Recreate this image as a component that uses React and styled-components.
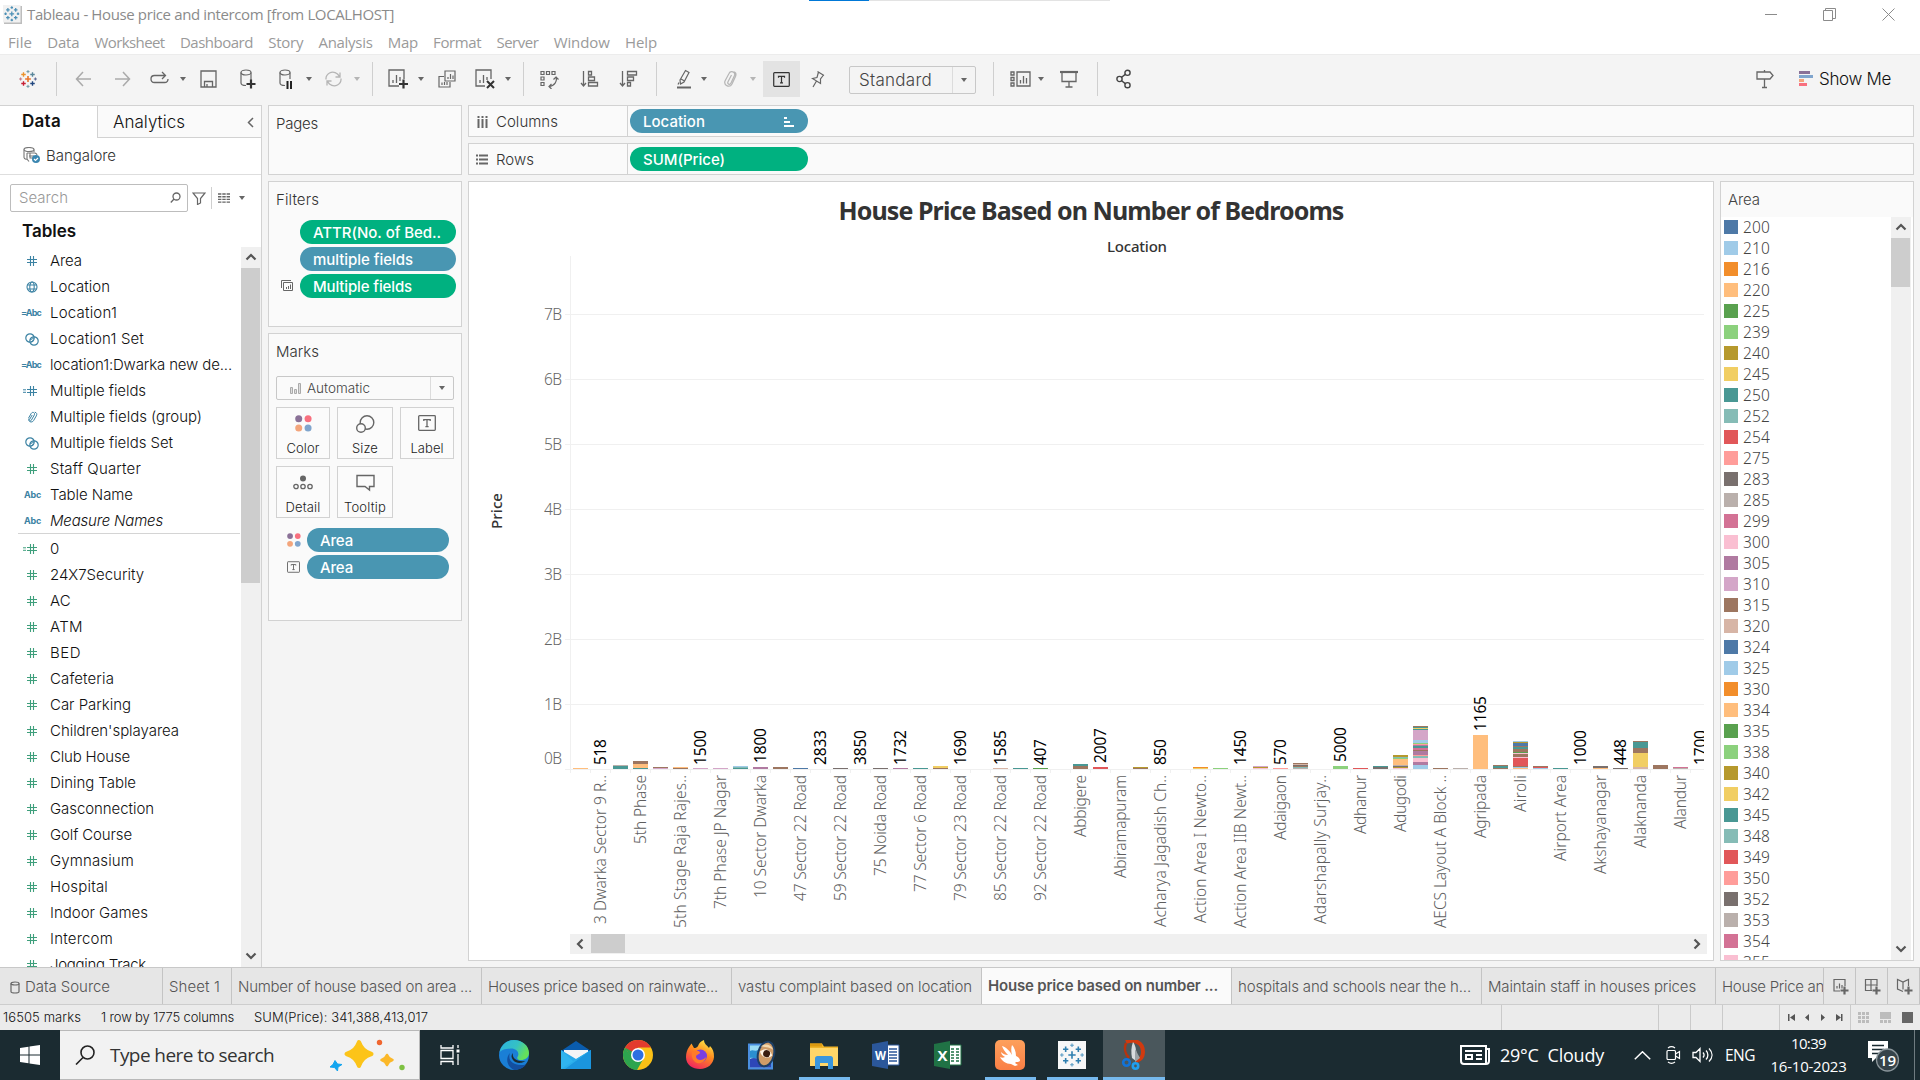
import React, { useLayoutEffect, useRef } from "react";
import styled, { createGlobalStyle, css } from "styled-components";

const Global = createGlobalStyle`
  *, *::before, *::after { box-sizing: border-box; }
  html, body { margin: 0; padding: 0; overflow: hidden; }
  body { background: #f4f4f4; }
  svg { display: block; flex: none; }
`;

const UI = `"Inter", "Liberation Sans", sans-serif`;
const VIZ = `"Noto Sans", "Open Sans", sans-serif`;
const WIN = `"Open Sans", "Noto Sans", sans-serif`;
const LINE = "#d2d2d2";
const BLUE = "#4996b2";
const GREEN = "#00b180";

/* ---------- text that keeps a given advance width ---------- */
const Run = styled.span`
  display: inline-block;
  white-space: pre;
  flex: none;
`;

function Fit({ w, children }) {
  const ref = useRef(null);
  useLayoutEffect(() => {
    const el = ref.current;
    el.style.letterSpacing = "0px";
    const natural = el.getBoundingClientRect().width;
    el.style.letterSpacing = `${(w + 1 - natural) / String(children).length}px`;
  }, [w, children]);
  return <Run ref={ref}>{children}</Run>;
}

/* ---------- page frame ---------- */
const Screen = styled.div`
  width: 1920px;
  height: 1080px;
  overflow: hidden;
  display: flex;
  flex-direction: column;
  background: #f4f4f4;
  font: 350 15px/20px ${UI};
  color: #333;
`;

const TitleBar = styled.header`
  height: 30px;
  background: #fff;
  display: flex;
  align-items: center;
  padding: 0 25px 2px 3px;
  position: relative;
  font: 400 15px/20px ${WIN};
  color: #8b8b8b;
`;
const TitleText = styled.div`
  margin-left: 5px;
  flex: 1;
`;
const LoadStrip = styled.div`
  position: absolute;
  top: 0;
  left: 809px;
  width: 301px;
  height: 1px;
  background: linear-gradient(90deg, #0078d7 60px, #e3e3e3 60px);
`;
const WindowButtons = styled.div`
  display: flex;
  align-items: center;
  gap: 46px;
`;

const MenuBar = styled.nav`
  height: 24px;
  background: #fff;
  display: flex;
  gap: 15.3px;
  padding: 2px 8px 0;
  font: 400 15px/20px ${WIN};
  color: #9a9a9a;
`;

const Toolbar = styled.div`
  height: 51px;
  border-top: 1px solid #ececec;
  display: flex;
  align-items: center;
  padding-bottom: 2px;
`;
const Slot = styled.div`
  width: ${(p) => p.$w}px;
  margin-left: ${(p) => p.$l}px;
  height: 36px;
  display: flex;
  align-items: center;
  justify-content: center;
  flex: none;
  background: ${(p) => (p.$on ? "#e3e3e3" : "transparent")};
`;
const Rule = styled.div`
  width: 1px;
  height: ${(p) => p.$h || 34}px;
  margin-left: ${(p) => p.$l}px;
  background: #cfcfcf;
  flex: none;
`;
const Caret = styled.i`
  width: 0;
  height: 0;
  flex: none;
  margin-left: ${(p) => p.$l || 0}px;
  border: ${(p) => p.$s || 3}px solid transparent;
  border-top: ${(p) => (p.$s || 3) + 1}px solid ${(p) => p.$c || "#666"};
  border-bottom: 0;
`;
const FitSelect = styled.div`
  width: 127px;
  height: 28px;
  margin: 2px 0 0 24px;
  border: 1px solid #c8c8c8;
  border-radius: 2px;
  display: flex;
  align-items: center;
  font-size: 17px;
  padding-left: 9px;
  color: #444;
  flex: none;
`;
const SelectArrow = styled.div`
  margin-left: auto;
  width: ${(p) => p.$w}px;
  height: 100%;
  border-left: 1px solid #dcdcdc;
  display: flex;
  align-items: center;
  justify-content: center;
`;
const ShowMe = styled.div`
  display: flex;
  align-items: center;
  gap: 6px;
  margin-left: 25px;
  font-size: 17px;
  color: #111;
`;

const Work = styled.main`
  height: 862px;
  display: flex;
`;

/* ---------- data pane ---------- */
const DataPane = styled.aside`
  width: 262px;
  background: #fff;
  border-top: 1px solid ${LINE};
  border-right: 1px solid ${LINE};
  display: flex;
  flex-direction: column;
  color: #111;
`;
const PaneTabs = styled.div`
  display: flex;
  height: 32px;
`;
const PaneTab = styled.div`
  width: ${(p) => (p.$active ? 97 : 164)}px;
  display: flex;
  align-items: center;
  font-size: 17px;
  color: #111;
  ${(p) =>
    p.$active
      ? css`
          font-weight: 600;
          padding: 0 0 2px 22px;
        `
      : css`
          background: #fafafa;
          border-left: 1px solid ${LINE};
          border-bottom: 1px solid ${LINE};
          justify-content: space-between;
          padding: 1px 7px 0 15px;
        `}
`;
const Source = styled.div`
  height: 37px;
  border-bottom: 1px solid #dedede;
  display: flex;
  align-items: center;
  padding: 0 0 1px 23px;
  gap: 5px;
  color: #333;
`;
const SearchRow = styled.div`
  height: 46px;
  display: flex;
  align-items: center;
  padding-left: 10px;
`;
const SearchBox = styled.div`
  width: 178px;
  height: 28px;
  border: 1px solid #bdbdbd;
  border-radius: 2px;
  display: flex;
  align-items: center;
  justify-content: space-between;
  padding: 0 6px 0 8px;
  color: #999;
  margin-right: 4px;
`;
const TablesHead = styled.div`
  height: 26px;
  padding: 0 0 0 22px;
  font-size: 17px;
  font-weight: 600;
  color: #111;
`;
const FieldArea = styled.div`
  flex: 1;
  min-height: 0;
  display: flex;
  justify-content: space-between;
`;
const FieldList = styled.div`
  width: 240px;
  height: 720px;
  overflow: hidden;
  padding-top: 1px;
`;
const FieldRow = styled.div`
  height: 26px;
  display: flex;
  align-items: center;
  font-style: ${(p) => (p.$italic ? "italic" : "normal")};
`;
const FieldIcon = styled.div`
  width: 50px;
  height: 26px;
  display: flex;
  align-items: center;
  padding-left: ${(p) => p.$l}px;
  flex: none;
  color: ${(p) => (p.$dim ? "#3b82a3" : "#3f9f7c")};
`;
const AbcTag = styled.span`
  font: normal 700 9px/12px ${UI};
`;
const Divider = styled.div`
  height: 1px;
  margin: -1px 0 2px 18px;
  background: #d4d4d4;
`;

const VScroll = styled.div`
  width: 20px;
  height: ${(p) => p.$h}px;
  background: #f0f0f0;
  display: flex;
  flex-direction: column;
  align-items: center;
`;
const ScrollEnd = styled.div`
  height: 21px;
  width: ${(p) => p.$w || 20}px;
  padding: 0 1px 1px 0;
  display: flex;
  align-items: center;
  justify-content: center;
  flex: none;
`;
const VThumb = styled.div`
  width: 19px;
  height: ${(p) => p.$h}px;
  background: #cdcdcd;
  align-self: flex-start;
  margin-bottom: auto;
`;

/* ---------- cards column ---------- */
const Cards = styled.section`
  width: 206px;
  padding-left: 6px;
  display: flex;
  flex-direction: column;
  gap: 6px;
`;
const Card = styled.div`
  width: 194px;
  height: ${(p) => p.$h}px;
  background: #fafafa;
  border: 1px solid ${LINE};
  display: flex;
  flex-direction: column;
  align-items: flex-start;
  padding: 8px 0 0 7px;
  color: #333;
`;
const PillLine = styled.div`
  display: flex;
  align-items: center;
  height: 27px;
  padding-left: ${(p) => p.$l}px;
`;
const PillIcon = styled.div`
  width: ${(p) => p.$w}px;
`;
const Pill = styled.div`
  width: ${(p) => p.$w}px;
  height: 24px;
  border-radius: 12px;
  background: ${(p) => p.$c};
  color: #fff;
  display: flex;
  align-items: center;
  justify-content: space-between;
  padding: 2px 14px 0 13px;
  font-weight: 500;
  flex: none;
`;
const PillStack = styled.div`
  margin-top: ${(p) => p.$mt}px;
`;
const MarkType = styled.div`
  width: 178px;
  height: 24px;
  margin: 14px 0 7px 0;
  border: 1px solid #c8c8c8;
  border-radius: 2px;
  display: flex;
  align-items: center;
  padding-left: 13px;
  gap: 6px;
  font-size: 13.5px;
  color: #444;
`;
const MarkGrid = styled.div`
  display: grid;
  grid-template-columns: 54px 56px 54px;
  grid-auto-rows: 52px;
  gap: 7px;
`;
const MarkButton = styled.div`
  border: 1px solid ${LINE};
  background: #fbfbfb;
  display: flex;
  flex-direction: column;
  align-items: center;
  justify-content: space-between;
  padding: 7px 0 0;
  font-size: 13px;
  color: #222;
`;

/* ---------- shelves and view ---------- */
const Right = styled.section`
  width: 1446px;
  display: flex;
  flex-direction: column;
  gap: 6px;
`;
const Shelf = styled.div`
  height: 32px;
  background: #fafafa;
  border: 1px solid ${LINE};
  display: flex;
  align-items: center;
`;
const ShelfName = styled.div`
  width: 159px;
  height: 100%;
  border-right: 1px solid ${LINE};
  display: flex;
  align-items: center;
  padding: 1px 0 0 ${(p) => p.$l}px;
  gap: 8px;
  margin-right: 2px;
  color: #333;
`;
const Lower = styled.div`
  display: flex;
  gap: 6px;
  height: 780px;
`;
const View = styled.div`
  width: 1246px;
  border: 1px solid ${LINE};
  background: #fff;
  display: flex;
  flex-direction: column;
`;
const ChartTitle = styled.h1`
  margin: 0;
  height: 50px;
  padding-top: 11px;
  text-align: center;
  font: 700 25px/34px ${VIZ};
  color: #333;
`;
const HScroll = styled.div`
  width: 1137px;
  height: 20px;
  margin: 0 0 0 101px;
  background: #f0f0f0;
  display: flex;
  align-items: center;
`;
const HThumb = styled.div`
  width: 34px;
  height: 19px;
  background: #cdcdcd;
  margin-right: auto;
  align-self: flex-start;
`;
const Legend = styled.div`
  width: 194px;
  border: 1px solid ${LINE};
  background: #fafafa;
`;
const LegendHead = styled.div`
  height: 35px;
  padding: 8px 0 0 7px;
  color: #444;
`;
const LegendBody = styled.div`
  height: 743px;
  background: #fff;
  display: flex;
  justify-content: space-between;
  padding-right: 2px;
`;
const LegendList = styled.div`
  height: 743px;
  overflow: hidden;
  padding-left: 3px;
`;
const LegendItem = styled.div`
  height: 21px;
  display: flex;
  align-items: flex-start;
  gap: 5px;
  font: 350 15.5px/21px ${VIZ};
  color: #444;
`;
const Swatch = styled.div`
  width: 14px;
  height: 14px;
  margin-top: 3px;
  background: ${(p) => p.$c};
`;

/* ---------- bottom ---------- */
const SheetTabs = styled.div`
  height: 38px;
  background: #e6e6e6;
  border-top: 1px solid #c8c8c8;
  border-bottom: 1px solid #cdcdcd;
  display: flex;
  flex: none;
`;
const SheetTab = styled.div`
  width: ${(p) => p.$w}px;
  border-right: 1px solid #c4c4c4;
  padding: ${(p) => (p.$active ? 0 : 2)}px 0 0 ${(p) => p.$l ?? 6}px;
  display: flex;
  align-items: center;
  gap: 5px;
  overflow: hidden;
  flex: none;
  color: #555;
  background: ${(p) => (p.$active ? "#fafafa" : "transparent")};
  font-weight: ${(p) => (p.$active ? 600 : 350)};
`;
const Status = styled.div`
  height: 25px;
  background: #ebebeb;
  display: flex;
  flex: none;
  font-size: 13px;
  line-height: 24px;
  color: #111;
`;
const StatusText = styled.div`
  padding-left: ${(p) => p.$l}px;
`;
const StatusCell = styled.div`
  width: ${(p) => p.$w}px;
  margin-left: ${(p) => (p.$push ? "auto" : 0)};
  border-left: 1px solid #cacaca;
  display: flex;
  align-items: center;
  justify-content: center;
  padding-bottom: 1px;
`;

const TaskBar = styled.footer`
  height: 50px;
  flex: none;
  background: #1b2b31;
  display: flex;
  color: #fff;
  font: 400 16px/24px ${WIN};
`;
const Start = styled.div`
  width: 60px;
  display: flex;
  align-items: center;
  justify-content: center;
`;
const TaskSearch = styled.div`
  width: 360px;
  background: #f2f2f2;
  border: 1px solid #b9b9b9;
  border-left: 0;
  display: flex;
  align-items: center;
  padding: 0 12px 0 15px;
  color: #333;
  font-size: 19px;
  line-height: 26px;
`;
const TaskSearchText = styled.div`
  margin: 0 auto 0 15px;
`;
const TaskTile = styled.div`
  width: ${(p) => (p.$first ? 63 : 62)}px;
  padding-right: ${(p) => (p.$first ? 3 : 0)}px;
  display: flex;
  flex-direction: column;
  align-items: center;
  justify-content: flex-end;
  background: ${(p) => (p.$focus ? "#4a575c" : "transparent")};
`;
const TaskArt = styled.div`
  height: 47px;
  display: flex;
  align-items: center;
  padding-top: 2px;
`;
const OpenBar = styled.div`
  height: 3px;
  width: ${(p) => p.$w}px;
  background: #76b9ed;
`;
const Tray = styled.div`
  margin-left: auto;
  display: flex;
  align-items: center;
  padding-right: 5px;
`;
const TrayItem = styled.div`
  margin-left: ${(p) => p.$l}px;
  font-size: ${(p) => p.$s || 16}px;
`;
const Clock = styled.div`
  margin-left: 15px;
  width: 77px;
  text-align: center;
  font-size: 15px;
  line-height: 23px;
  padding-bottom: 1px;
`;
const ShowDesk = styled.div`
  width: 1px;
  height: 50px;
  background: #6f7b80;
  margin-left: 13px;
`;

/* ---------- icons ---------- */
const Svg = ({ w = 18, h = 18, c = "#666", s = 1.2, children }) => (
  <svg width={w} height={h} viewBox={`0 0 ${w} ${h}`} fill="none" stroke={c} strokeWidth={s}>
    {children}
  </svg>
);

const plus = (x, y, r, c, s = 1.4) => (
  <path key={`${x}-${y}`} d={`M${x - r} ${y}h${2 * r}M${x} ${y - r}v${2 * r}`} stroke={c} strokeWidth={s} />
);
const TableauMark = ({ size = 18 }) => (
  <svg width={size} height={size} viewBox="0 0 20 20" fill="none">
    {plus(10, 10, 3.2, "#e8762d", 1.8)}
    {plus(5, 5, 2.5, "#eb912b", 1.5)}
    {plus(15, 5, 2.5, "#59879b", 1.5)}
    {plus(5, 15, 2.5, "#c72035", 1.5)}
    {plus(15, 15, 2.5, "#1f457e", 1.5)}
    {plus(10, 1.8, 1.7, "#7099a6", 1.1)}
    {plus(10, 18.2, 1.7, "#7199a6", 1.1)}
    {plus(1.8, 10, 1.7, "#c4787f", 1.1)}
    {plus(18.2, 10, 1.7, "#5b6591", 1.1)}
  </svg>
);
const Chev = ({ d, w = 12, h = 12 }) => (
  <svg width={w} height={h} viewBox="0 0 12 12" fill="none" stroke="#555" strokeWidth="2.2">
    <path d={{ up: "M1.5 8.5 6 4l4.5 4.5", down: "M1.5 3.5 6 8l4.5-4.5", left: "M8.5 1.5 4 6l4.5 4.5", right: "M3.5 1.5 8 6l-4.5 4.5" }[d]} />
  </svg>
);
const HashIcon = () => (
  <Svg w={10} h={10} c="currentColor" s={1.1}>
    <path d="M3.5 0v10M6.5 0v10M0 3.5h10M0 6.5h10" />
  </Svg>
);
const EqIcon = () => (
  <Svg w={14} h={10} c="currentColor" s={1.1}>
    <path d="M0 3.8h3M0 6.3h3" strokeWidth="1" />
    <path d="M7.5 0v10M10.5 0v10M4 3.5h10M4 6.5h10" />
  </Svg>
);
const GlobeIcon = () => (
  <Svg w={12} h={12} c="currentColor" s={1.1}>
    <circle cx="6" cy="6" r="5" />
    <ellipse cx="6" cy="6" rx="2.2" ry="5" />
    <path d="M1.5 4h9M1.5 8h9" />
  </Svg>
);
const SetIcon = () => (
  <Svg w={14} h={13} c="currentColor" s={1.2}>
    <circle cx="5" cy="5" r="4.2" />
    <circle cx="9" cy="8" r="4.2" />
    <path d="M5 7l4-2M6 9l3-2" strokeWidth=".9" />
  </Svg>
);
const ClipIcon = () => (
  <Svg w={12} h={12} c="currentColor" s={1}>
    <path d="M2.6 7 5.3 2.3c1.3-2 4.1-.5 3 1.7L5.3 9.3c-.7 1.2-2.3.3-1.7-.9L6.2 4M8.8 1.2c2 .4 2.5 2 1.5 3.7L7.5 9.7c-1.6 2.6-6 .9-4.600-2.300" />
  </Svg>
);
const TIcon = ({ w = 18, h = 16, c = "#666" }) => (
  <svg width={w} height={h} viewBox="0 0 18 16" fill="none" stroke={c} strokeWidth="1.3">
    <rect x=".7" y=".7" width="16.6" height="14.6" rx=".8" />
    <path d="M5.8 6V4.6h6.4V6M9 4.6v7M7.4 11.6h3.2" />
  </svg>
);
const FourDots = ({ s = 16 }) => (
  <svg width={s} height={s} viewBox="0 0 16 16">
    <circle cx="3.5" cy="3.5" r="3.3" fill="#8a7197" />
    <circle cx="12.3" cy="3.5" r="3.3" fill="#f8707f" />
    <circle cx="3.5" cy="12.3" r="3.3" fill="#f3a57c" />
    <circle cx="12.3" cy="12.3" r="3.3" fill="#80a5cd" />
  </svg>
);

const FIELD_ICON = {
  n: [27, <HashIcon />],
  e: [23, <EqIcon />],
  g: [26, <GlobeIcon />],
  s: [25, <SetIcon />],
  c: [26, <ClipIcon />],
  a: [24, <AbcTag><Fit w={16}>Abc</Fit></AbcTag>],
  x: [21, <AbcTag><Fit w={19}>=Abc</Fit></AbcTag>],
};

const DIMENSIONS = [
  ["n", "Area", 31, 1], ["g", "Location", 59, 1], ["x", "Location1", 66, 1], ["s", "Location1 Set", 93, 1],
  ["x", "location1:Dwarka new de...", 181, 1], ["e", "Multiple fields", 95, 1], ["c", "Multiple fields (group)", 151, 1],
  ["s", "Multiple fields Set", 122, 1], ["n", "Staff Quarter", 90, 0], ["a", "Table Name", 82, 1], ["a", "Measure Names", 112, 1],
];
const MEASURES = [
  ["e", "0", 9], ["n", "24X7Security", 93], ["n", "AC", 20], ["n", "ATM", 32], ["n", "BED", 30], ["n", "Cafeteria", 63],
  ["n", "Car Parking", 80], ["n", "Children'splayarea", 128], ["n", "Club House", 79], ["n", "Dining Table", 85],
  ["n", "Gasconnection", 103], ["n", "Golf Course", 81], ["n", "Gymnasium", 83], ["n", "Hospital", 57],
  ["n", "Indoor Games", 97], ["n", "Intercom", 62], ["n", "Jogging Track", 95],
];
const Field = ({ f }) => {
  const [l, icon] = FIELD_ICON[f[0]];
  return (
    <FieldRow $italic={f[1] === "Measure Names"}>
      <FieldIcon $l={l} $dim={f[3]}>{icon}</FieldIcon>
      <Fit w={f[2]}>{f[1]}</Fit>
    </FieldRow>
  );
};

/* ---------- chart data ---------- */
const PAL = {
  b: "#4e79a7", B: "#a0cbe8", o: "#f28e2b", O: "#ffbe7d", g: "#59a14f", G: "#8cd17d", m: "#b6992d", y: "#f1ce63",
  t: "#499894", T: "#86bcb6", r: "#e15759", R: "#ff9d9a", k: "#79706e", K: "#bab0ac", p: "#d37295", P: "#fabfd2",
  v: "#b07aa1", V: "#d4a6c8", w: "#9d7660", W: "#d7b5a6",
};
const LEGEND_ORDER = "bBoOgGmytTrRkKpPvVwW";
const AREAS = [200, 210, 216, 220, 225, 239, 240, 245, 250, 252, 254, 275, 283, 285, 299, 300, 305, 310, 315, 320, 324, 325, 330, 334, 335, 338, 340, 342, 345, 348, 349, 350, 352, 353, 354, 355];

/* slot -> stack from top to bottom, "colour height" pairs */
const STACKS = {
  0: "O1", 2: "K1t3", 3: "w3O4t1", 4: "w1V1", 5: "O1w1", 6: "V1", 7: "V1", 8: "B1T1t1", 9: "v2", 10: "w2", 11: "b1",
  13: "k1", 15: "k1", 16: "v1", 17: "t1", 18: "y2w1", 21: "W1", 22: "t1", 23: "g1", 25: "t2w3", 26: "r2", 28: "m1w1",
  31: "o1y1", 32: "G1", 34: "V1m1P1", 35: "R1", 36: "w1W1k1w1T1K1", 38: "G3", 39: "r1", 40: "t1k2",
  41: "m2T1G1O6K1k1m1P1", 42: "w1t1y1t1V10B3G1R1v1t2p2w1v4R1T2P4v3B4", 43: "w1", 44: "K1", 45: "O34", 46: "w1t2w1",
  47: "B1m1b3w1t2w3g1P1w3P1r8w1B1O1", 48: "w1r1B1", 49: "t1", 51: "k2O1", 52: "k1", 53: "w1t6w5y14W2", 54: "w4", 55: "p1K1",
};
const MARKS = [
  [1, "518"], [6, "1500"], [9, "1800"], [12, "2833"], [14, "3850"], [16, "1732"], [19, "1690"], [21, "1585"], [23, "407"],
  [26, "2007"], [29, "850"], [33, "1450"], [35, "570"], [38, "5000"], [45, "1165"], [50, "1000"], [52, "448"], [56, "1700"],
];
const PLACES = [
  [1, "3 Dwarka Sector 9 R..", 149], [3, "5th Phase", 69], [5, "5th Stage Raja Rajes..", 153], [7, "7th Phase JP Nagar", 134],
  [9, "10 Sector Dwarka", 123], [11, "47 Sector 22 Road", 126], [13, "59 Sector 22 Road", 126], [15, "75 Noida Road", 101],
  [17, "77 Sector 6 Road", 117], [19, "79 Sector 23 Road", 126], [21, "85 Sector 22 Road", 126], [23, "92 Sector 22 Road", 126],
  [25, "Abbigere", 62], [27, "Abiramapuram", 103], [29, "Acharya Jagadish Ch..", 152], [31, "Action Area I Newto..", 148],
  [33, "Action Area IIB Newt..", 153], [35, "Adaigaon", 65], [37, "Adarshapally Surjay..", 149], [39, "Adhanur", 59],
  [41, "Adugodi", 57], [43, "AECS Layout A Block ..", 153], [45, "Agripada", 63], [47, "Airoli", 37], [49, "Airport Area", 86],
  [51, "Akshayanagar", 99], [53, "Alaknanda", 73], [55, "Alandur", 54],
];
const parse = (s) => [...s.matchAll(/([a-zA-Z])(\d+)/g)].map((m) => [PAL[m[1]], +m[2]]);

/* drawing space: origin at the top left of the view, under its title */
const OX = 469, OY = 232;
function Chart() {
  const base = 769 - OY;
  const left = 570 - OX;
  const right = 1704 - OX;
  return (
    <svg width="1244" height="702" viewBox="0 0 1244 702" fontFamily={VIZ} fontSize="15.5">
      <defs>
        <clipPath id="plot"><rect x="0" y="0" width={right} height="702" /></clipPath>
      </defs>
      <text x={1137 - OX} y={252 - OY} textAnchor="middle" fontWeight="500" fontSize="15" fill="#333" textLength="60">Location</text>
      <text transform={`translate(${502 - OX} ${511 - OY}) rotate(-90)`} textAnchor="middle" fontWeight="500" fontSize="15" fill="#333" textLength="36">Price</text>
      <g stroke="#f0f0f0" shapeRendering="crispEdges">
        {[7, 6, 5, 4, 3, 2, 1].map((n) => (
          <path key={n} d={`M${left - 5} ${base + 0.5 - 65 * n}H${right}`} />
        ))}
        <path d={`M${left + 0.5} ${256 - OY}V${base + 4}M${left - 5} ${base + 0.5}H${right}`} />
        {Array.from({ length: 57 }, (_, i) => (
          <path key={i} d={`M${left + i * 20 + 0.5} ${base}v4`} />
        ))}
      </g>
      <g fill="#666" fontWeight="350">
        {[7, 6, 5, 4, 3, 2, 1].map((n) => (
          <text key={n} x={544 - OX} y={base - 65 * n + 6} textLength="18">{n}B</text>
        ))}
        <text x={544 - OX} y={764 - OY} textLength="18">0B</text>
      </g>
      <g clipPath="url(#plot)">
        {Object.entries(STACKS).map(([i, s]) => {
          const parts = parse(s);
          let y = base - parts.reduce((a, b) => a + b[1], 0);
          return parts.map(([c, h], k) => {
            const top = y;
            y += h;
            return <rect key={`${i}-${k}`} x={left + 3 + i * 20} y={top} width="15" height={h} fill={c} shapeRendering="crispEdges" />;
          });
        })}
        <g fill="#000" fontWeight="400">
          {MARKS.map(([i, t]) => {
            const h = i === 45 ? 34 : i === 26 || i === 9 ? 2 : i === 38 ? 3 : 0;
            return (
              <text key={i} transform={`translate(${left + 16 + i * 20} ${base - 4 - h}) rotate(-90)`} textLength={t.length === 4 ? 35 : 26}>{t}</text>
            );
          })}
        </g>
        <g fill="#5e5e5e" fontWeight="350">
          {PLACES.map(([i, t, w]) => (
            <text key={i} transform={`translate(${left + 16 + i * 20} ${775 - OY + w}) rotate(-90)`} textLength={w}>{t}</text>
          ))}
        </g>
      </g>
    </svg>
  );
}

const MENUS = [["File", 23], ["Data", 31], ["Worksheet", 69], ["Dashboard", 72], ["Story", 34], ["Analysis", 53], ["Map", 29], ["Format", 47], ["Server", 41], ["Window", 55], ["Help", 31]];
const SHEETS = [
  ["Sheet 1", 69, 50], ["Number of house based on area ...", 250, 233], ["Houses price based on rainwate...", 250, 229],
  ["vastu complaint based on location", 250, 233], ["House price based on number ...", 250, 229, 1],
  ["hospitals and schools near the h...", 250, 232], ["Maintain staff in houses prices", 234, 207], ["House Price an", 108, 101],
];

const SheetIcon = ({ kind }) => (
  <Svg w={18} h={18} s={1.2}>
    {kind === 0 && <path d="M8 13H2V1.5h11V8M5 10.5V8M7.5 10.5v-5M10 10.5V7" />}
    {kind === 1 && <path d="M8 12.5H1.5v-11H13V8M7 1.5v11M1.5 7H13" />}
    {kind === 2 && <path d="M7 13.5 1.5 11V1.5L7 4l5.5-2.5V8M7 4v7.500" />}
    <path d="M12.5 8.5v8M8.5 12.5h8" strokeWidth="2.2" />
  </Svg>
);

const BAR_TOOLS = (
  <>
    <Slot $w={18} $l={19}><TableauMark size={18} /></Slot>
    <Rule $l={19} />
    <Slot $w={17} $l={18}><Svg w={17} c="#aaa" s={1.5}><path d="M16 9H1.5M8 2 1.5 9 8 16" /></Svg></Slot>
    <Slot $w={17} $l={22}><Svg w={17} c="#aaa" s={1.5}><path d="M1 9h14.5M9 2l6.5 7L9 16" /></Svg></Slot>
    <Slot $w={19} $l={19}><Svg w={19} s={1.3}><path d="M15 5.5H4.500C2 5.5 1 6.500 1 9s1 3.500 3.500 3.500h10c2.500 0 3.500-1 3.500-3.500M12 2l3.500 3.500L12 9" /></Svg></Slot>
    <Caret $l={11} />
    <Slot $w={17} $l={14}><Svg w={17} s={1.3}><path d="M1 1h15v16H1zM4.5 17v-5.500h8V17M7 17v-3" /></Svg></Slot>
    <Slot $w={16} $l={23}><Svg w={16} h={20} s={1.2}><ellipse cx="6" cy="3.5" rx="5" ry="2.5" /><path d="M1 3.5V14c0 1.500 2 2.500 5 2.500M11 3.500V11" /><path d="M11 10.500v9M6.500 15h9" stroke="#333" strokeWidth="2.2" /></Svg></Slot>
    <Slot $w={14} $l={23}><Svg w={14} h={20} s={1.2}><ellipse cx="6" cy="3.5" rx="5" ry="2.5" /><path d="M1 3.500V14c0 1.500 2 2.500 5 2.500M11 3.500V10" /><path d="M8.500 12v8M12 12v8" stroke="#222" strokeWidth="2" /></Svg></Slot>
    <Caret $l={13} />
    <Slot $w={18} $l={12}><Svg w={18} c="#b5b5b5" s={1.3}><path d="M2 9.500C1.500 4 8-.5 13.500 4L16 7M16 2.500V7h-4.500M17 8.500C17.500 14 11 18.500 5.500 14L3 11M3 15.500V11h4.500" /></Svg></Slot>
    <Caret $l={12} $c="#b5b5b5" />
    <Rule $l={12} />
    <Slot $w={20} $l={15}><Svg w={20} h={20} s={1.3}><path d="M11 17H1V1h15v9M5 14v-3M8.500 14V6M12 12V8" /><path d="M15.500 10.500v9M11 15h9" stroke="#333" strokeWidth="2.2" /></Svg></Slot>
    <Caret $l={10} />
    <Slot $w={18} $l={14}><Svg w={18} s={1.2}><path d="M7 1h10v10H7zM6 6.500H1V17h11v-5M10 9V7M12.500 9V4M15 9V5.500M4 15v-2.500M6.500 15v-3M9 15v-3" /></Svg></Slot>
    <Slot $w={20} $l={19}><Svg w={20} h={20} s={1.3}><path d="M10 17H1V1h15v9M5 14v-3M8.500 14V6M12 11V8" /><path d="M12 12l7 7M19 12l-7 7" stroke="#333" strokeWidth="2" /></Svg></Slot>
    <Caret $l={10} />
    <Rule $l={12} />
    <Slot $w={19} $l={16}><Svg w={19} h={19} s={1.2}><path d="M1 1.500h3v3H1zM6.500 1.500h3v3h-3zM12 1.500h3v3h-3zM1 7h3v3H1zM1 12.500h3v3H1zM16 7c1.500 4-1.500 9-7 9.500M13.500 9.500 16 7l2.500 2.500M11.500 14 9 16.500l2.500 2.500" /></Svg></Slot>
    <Slot $w={19} $l={21}><Svg w={19} h={18} s={1.3}><path d="M3.500 1v15M1 13l2.500 3L6 13M8.500 1.500h3v3.500h-3zM8.500 7h6v3.500h-6zM8.500 12.500h9V16h-9z" /></Svg></Slot>
    <Slot $w={19} $l={20}><Svg w={19} h={18} s={1.3}><path d="M3.500 1v15M1 13l2.500 3L6 13M8.500 1.500h9V5h-9zM8.500 7h6v3.500h-6zM8.500 12.500h3V16h-3z" /></Svg></Slot>
    <Rule $l={18} />
    <Slot $w={14} $l={20}><Svg w={14} h={20} s={1.2}><path d="M3 11 8.500 1.500l3.500 2L7 13l-3.500 2zM4 10l3.500 2M2 13.500l-1 2" /><path d="M0 18.500h14" strokeWidth="2" /></Svg></Slot>
    <Caret $l={10} />
    <Slot $w={14} $l={16}><Svg w={14} h={18} c="#b5b5b5" s={1.2}><path d="M2 11 6 3.500c1.500-3.500 7-1.500 5.500 2L8 13c-1.200 2.500-4 1-3-1.200L8.500 5M9 2c4-.5 4.500 2 3.500 4.500L9 14c-2 4-8.500 2-7-3" /></Svg></Slot>
    <Caret $l={13} $c="#b5b5b5" />
    <Slot $w={37} $l={7} $on><TIcon w={17} h={15} c="#333" /></Slot>
    <Slot $w={14} $l={11}><Svg w={14} h={18} s={1.2}><path d="M6.500 1.500 13 5.500M7.500 2 6 7.500 1.500 8.500 9.500 13.500 9.500 9l3-4M5.500 11 2 17" /></Svg></Slot>
    <FitSelect><Fit w={72}>Standard</Fit><SelectArrow $w={23}><Caret $s={3.5} /></SelectArrow></FitSelect>
    <Rule $l={17} />
    <Slot $w={21} $l={16}><Svg w={21} h={16} s={1.3}><path d="M1 1h3v3H1zM1 6.500h3v3H1zM1 12h3v3H1zM7 1h13v14H7zM10.500 12.500V9M13.500 12.500V5M16.500 12.500V7" /></Svg></Slot>
    <Caret $l={7} />
    <Slot $w={18} $l={16}><Svg w={18} h={18} s={1.3}><path d="M2 3v8.500h14V3M9 11.500V17M5.500 17h7" /><path d="M0 2h18" strokeWidth="2.2" /></Svg></Slot>
    <Rule $l={19} />
    <Slot $w={16} $l={18}><Svg w={16} h={20} c="#444" s={1.4}><circle cx="3.5" cy="10" r="2.6" /><circle cx="11.500" cy="3.8" r="2.6" /><circle cx="11.500" cy="16.2" r="2.6" /><path d="m5.600 8.300 3.700-2.900M5.600 11.700l3.700 2.900" /></Svg></Slot>
  </>
);

const APPS = [
  [0, <svg width="20" height="20" viewBox="0 0 20 20" fill="none" stroke="#fff" strokeWidth="1.3"><path d="M1 0v3h12V0M1 5.500h12v8H1zM1 20v-3.500h12V20M18 0v3M18 9v11" /><path d="M16.500 6h3" strokeWidth="3" /></svg>],
  [0, <svg width="30" height="30" viewBox="0 0 30 30"><defs><linearGradient id="eg" x1="0" y1="0" x2="1" y2=".4"><stop offset="0" stopColor="#2bb2e0" /><stop offset=".6" stopColor="#35c1c4" /><stop offset="1" stopColor="#65e05a" /></linearGradient></defs><circle cx="15" cy="15" r="15" fill="#1a7fd6" /><path d="M.5 13C2 4.500 8 0 15 0c8 0 15 5.500 15 13 0 4.500-4 7-8 7-3 0-4.500-1.500-3.500-3 3-5-2-9-7-8.500C6 9 1.500 10 .5 13z" fill="url(#eg)" /><path d="M11 13c-3 8 4 14 16 11.500C24 28.500 19.500 30 15 30 8 27 6 18 11 13z" fill="#134f9f" /><path d="M14 13c-1.500 5 4 9.500 13 8 0 0-8 5-13-1-2-2.500-2-5.500 0-7z" fill="#1b2b31" /></svg>],
  [0, <svg width="30" height="30" viewBox="0 0 30 30"><path d="M0 11 15 1l15 10v4H0z" fill="#0a5cad" /><path d="M3 10h24v12H3z" fill="#f4f4f6" /><path d="M0 10v19h30V10L15 19z" fill="#28a8ea" /><path d="M0 29 30 10v19z" fill="#1b95de" /><path d="M30 10 12 21 0 10v19h4z" fill="#35bdf2" opacity=".6" /></svg>],
  [0, <svg width="30" height="30" viewBox="0 0 30 30"><circle cx="15" cy="15" r="15" fill="#fbc116" /><path d="M2 7.500A15 15 0 0 0 14 30l6.500-11.500L9 18z" fill="#2da44e" /><path d="M2 7.500A15 15 0 0 1 28 7.500H15L9 18z" fill="#e33b2e" /><path d="M2 7.500 8.500 18.500 15 15z" fill="#2da44e" /><circle cx="15" cy="15" r="7" fill="#fff" /><circle cx="15" cy="15" r="5.5" fill="#2f6fe0" /></svg>],
  [0, <svg width="30" height="30" viewBox="0 0 30 30"><defs><linearGradient id="ff" x1=".8" y1="0" x2=".3" y2="1"><stop offset="0" stopColor="#fff04a" /><stop offset=".45" stopColor="#ff8a1f" /><stop offset="1" stopColor="#f2245f" /></linearGradient></defs><path d="M4 7 6.500 3.500 9 8c2 0 3-.5 4-2 1-3 3-5 6-6 0 4 3 5 5 8l1-2c3 3 4 6 4 11-.5 7-6.500 12-14 12S1 25 1 17c0-4 1-7 3-10z" fill="url(#ff)" /><circle cx="15.5" cy="16" r="6.5" fill="#7a3ee0" /><path d="M7 12c4-1 8-2 8 1-1 2-4 1-4 4 1 4 7 4 10 0-1 5-5 7-9 6-4-2-6-6-5-11z" fill="#ff7a2a" /></svg>],
  [0, <svg width="30" height="30" viewBox="0 0 30 30"><path d="M1 3.500h25v26H1z" fill="#4a8fe0" /><path d="M3 5.500h21v22H3z" fill="#9adcf5" /><path d="M3 19c6-3 12 2 21 3v5.500H3z" fill="#2d46b8" /><path d="M3 11c3-2 5 1 8-1l-1 8c-3 1-5-1-7 0z" fill="#2b8fd0" /><g transform="rotate(14 19 14)"><ellipse cx="19" cy="14" rx="8" ry="12.5" fill="#cf9c68" stroke="#1d3f66" strokeWidth="2" /><path d="M12.500 13c4-5 9-5 13 1-4 5-9 5-13-1z" fill="#fff5e6" /><circle cx="19.5" cy="13.5" r="3.5" fill="#3a1d10" /><path d="M12 8c3-4 9-5 13 0-3-1-9-1-13 0z" fill="#f3d8ae" /></g></svg>],
  [51, <svg width="28" height="28" viewBox="0 0 28 28"><path d="M0 2.500h12l2 3H28V25H0z" fill="#f0b429" /><path d="M0 7h28v18H0z" fill="#ffd668" /><path d="M5 28V17.500c0-1.500 1-2.500 2.500-2.500h13c1.500 0 2.500 1 2.500 2.500V28h-5v-6h-8v6z" fill="#3a96dd" /><path d="M0 2.500h12v3H0z" fill="#dd9a10" /></svg>],
  [0, <svg width="28" height="28" viewBox="0 0 28 28"><path d="M14 4h13v20H14z" fill="#fff" stroke="#2b579a" /><path d="M17 8h8M17 11h8M17 14h8M17 17h8M17 20h8" stroke="#2b579a" strokeWidth="1.5" /><path d="M0 3 16 0v28L0 25z" fill="#2b579a" /><text x="3" y="19" fontFamily="Open Sans" fontWeight="700" fontSize="13" textLength="11" lengthAdjust="spacingAndGlyphs" fill="#fff">W</text></svg>],
  [0, <svg width="28" height="28" viewBox="0 0 28 28"><path d="M14 4h13v20H14z" fill="#fff" stroke="#207245" /><path d="M17 8h3M22 8h3M17 11h3M22 11h3M17 14h3M22 14h3M17 17h3M22 17h3M17 20h3M22 20h3" stroke="#207245" strokeWidth="1.6" /><path d="M0 3 16 0v28L0 25z" fill="#207245" /><text x="3.5" y="19.5" fontFamily="Open Sans" fontWeight="700" fontSize="15" fill="#fff">X</text></svg>],
  [51, <svg width="30" height="30" viewBox="0 0 30 30"><defs><linearGradient id="rb" x1="0" y1="0" x2="0" y2="1"><stop offset="0" stopColor="#fda05c" /><stop offset="1" stopColor="#fa7f45" /></linearGradient></defs><rect width="30" height="30" rx="5" fill="url(#rb)" /><path d="M7 6c4 1 8 5 10 9-1-4-1-7 0-10 2 2 4 6 4 11 3 1 4 3 4 5-1 1-3 1-4 1l-1 1 3 2-3 1-4-2c-5 0-9-3-11-7 2 1 3 1 5 0-2-1-4-3-4-5 2 2 4 3 7 3-3-3-5-6-6-9z" fill="#fff" /></svg>],
  [51, <svg width="28" height="28" viewBox="0 0 28 28"><path d="M0 0h28v28H0z" fill="#f7f7f7" /><g transform="translate(2.5 2.5) scale(1.15)">{plus(10, 10, 3.2, "#2f7fb0")}{plus(4.5, 5, 2.3, "#2f7fb0")}{plus(15.5, 5, 2.3, "#2f7fb0")}{plus(4.5, 15, 2.3, "#2f7fb0")}{plus(15.5, 15, 2.3, "#2f7fb0")}{plus(10, 1.5, 1.6, "#5a9cc4", 1)}{plus(10, 18.5, 1.6, "#5a9cc4", 1)}{plus(1.2, 10, 1.6, "#5a9cc4", 1)}{plus(18.8, 10, 1.6, "#5a9cc4", 1)}</g></svg>],
  [62, <svg width="28" height="30" viewBox="0 0 28 30"><path d="M6 2c8-3 17 0 17 10 0 5-3 8-7 9" fill="none" stroke="#d13a0f" strokeWidth="4" /><path d="M6 3C4 8 5 14 9 18" fill="none" stroke="#b8330e" strokeWidth="2.5" /><path d="M13 2c3 4 4 10 3 19l-4-3c-1-5-1-11 1-16z" fill="#d8dcde" /><path d="M15 9l5 9-5 4z" fill="#9aa2a6" /><circle cx="6.500" cy="22.5" r="3.3" fill="none" stroke="#1273d8" strokeWidth="2.6" /><circle cx="15.5" cy="26" r="2.7" fill="none" stroke="#1f9ff0" strokeWidth="2.6" /></svg>],
];

export default function App() {
  return (
    <Screen>
      <Global />
      <TitleBar>
        <LoadStrip />
        <svg width="19" height="19" viewBox="0 0 19 19"><path d="M1 1h18v18H1z" fill="#bdbdbd" /><path d="M0 0h17.500v17.500H0z" fill="#f1f1f1" /><g transform="translate(1 1) scale(.78)" fill="none">{[[10, 10, 3], [5, 5, 2.3], [15, 5, 2.3], [5, 15, 2.3], [15, 15, 2.3], [10, 2, 1.6], [10, 18, 1.6], [2, 10, 1.6], [18, 10, 1.6]].map(([x, y, r]) => plus(x, y, r, "#4b8fb5", 1.6))}</g></svg>
        <TitleText><Fit w={366}>Tableau - House price and intercom [from LOCALHOST]</Fit></TitleText>
        <WindowButtons>
          <Svg w={12} h={13} c="#8b8b8b" s={1}><path d="M0 6.500h12" /></Svg>
          <Svg w={13} h={13} c="#8b8b8b" s={1}><path d="M.5 2.500h9v10h-9zM2.500 2.500v-2h10v10h-3" /></Svg>
          <Svg w={13} h={13} c="#8b8b8b" s={1}><path d="m.5.5 12 12M12.500.5l-12 12" /></Svg>
        </WindowButtons>
      </TitleBar>
      <MenuBar>{MENUS.map(([t, w]) => <Fit key={t} w={w}>{t}</Fit>)}</MenuBar>
      <Toolbar>
        {BAR_TOOLS}
        <Slot $w={18} $l={624}><Svg w={18} h={20} s={1.3}><path d="M8.500 1v2M1 3h13l3 3.500-3 3.500H1zM8.500 10v8.500M6 18.500h5" /></Svg></Slot>
        <ShowMe>
          <svg width="14" height="16"><path d="M0 0h11v3H0z" fill="#8a7197" /><path d="M0 4h14v3H0z" fill="#80a5cd" /><path d="M0 8h5v3H0z" fill="#f3a57c" /><path d="M0 12h8v3H0z" fill="#f8707f" /></svg>
          <Fit w={71}>Show Me</Fit>
        </ShowMe>
      </Toolbar>

      <Work>
        <DataPane>
          <PaneTabs>
            <PaneTab $active><Fit w={38}>Data</Fit></PaneTab>
            <PaneTab><Fit w={71}>Analytics</Fit><Svg w={7} h={11} s={1.5}><path d="M6 1 1.500 5.500 6 10" /></Svg></PaneTab>
          </PaneTabs>
          <Source>
            <Svg w={18} h={17} c="#777" s={1.1}><ellipse cx="6" cy="2.5" rx="5" ry="2" /><path d="M1 2.500v8c0 1 1 1.500 2.500 2M4 6h8c1.500.5 2 1 2 2M4 6v6l2 2.500M7 6v5h4M6 9h5M11 2.500V5" /><circle cx="13" cy="12" r="4" fill="#3b86b0" stroke="none" /><path d="m11 12 1.500 1.500L15 11" stroke="#fff" /></Svg>
            <Fit w={69}>Bangalore</Fit>
          </Source>
          <SearchRow>
            <SearchBox><Fit w={48}>Search</Fit><Svg w={11} h={12} s={1.3}><circle cx="6.5" cy="4.5" r="3.5" /><path d="M4 7 .8 10.500" /></Svg></SearchBox>
            <Svg w={14} h={13} s={1.2}><path d="M1 1h12L8.500 6.500V11l-3 1.500v-6z" /></Svg>
            <Rule $l={5} $h={22} />
            <Slot $w={12} $l={6}><Svg w={12} h={10} s={1.4}><path d="M0 1h12M0 3.700h12M0 6.400h12M0 9.100h12" strokeDasharray="3.4 .9" /></Svg></Slot>
            <Caret $l={9} $s={3.5} />
          </SearchRow>
          <TablesHead><Fit w={53}>Tables</Fit></TablesHead>
          <FieldArea>
            <FieldList>
              {DIMENSIONS.map((f) => <Field key={f[1]} f={f} />)}
              <Divider />
              {MEASURES.map((f) => <Field key={f[1]} f={f} />)}
            </FieldList>
            <VScroll $h={720}><ScrollEnd><Chev d="up" /></ScrollEnd><VThumb $h={315} /><ScrollEnd><Chev d="down" /></ScrollEnd></VScroll>
          </FieldArea>
        </DataPane>

        <Cards>
          <Card $h={70}><Fit w={41}>Pages</Fit></Card>
          <Card $h={146}>
            <Fit w={42}>Filters</Fit>
            <PillStack $mt={8}>
              <PillLine $l={5}><PillIcon $w={19} /><Pill $w={156} $c={GREEN}><Fit w={127}>ATTR(No. of Bed..</Fit></Pill></PillLine>
              <PillLine $l={5}><PillIcon $w={19} /><Pill $w={156} $c={BLUE}><Fit w={99}>multiple fields</Fit></Pill></PillLine>
              <PillLine $l={5}><PillIcon $w={19}><Svg w={12} h={11} s={1}><path d="M.5 8V.5h9.500M2.500 2.500h9v8h-9zM5.500 9V7M7.500 9V6M9.500 9V4.500" /></Svg></PillIcon><Pill $w={156} $c={GREEN}><Fit w={98}>Multiple fields</Fit></Pill></PillLine>
            </PillStack>
          </Card>
          <Card $h={288}>
            <Fit w={42}>Marks</Fit>
            <MarkType>
              <Svg w={11} h={11} c="#aaa" s={1}><path d="M.5 4.500h2v6h-2zM4.500 6.500h2v4h-2zM8.500.5h2v10h-2z" fill="#ddd" /></Svg>
              <Fit w={62}>Automatic</Fit>
              <SelectArrow $w={23}><Caret $s={3.5} /></SelectArrow>
            </MarkType>
            <MarkGrid>
              <MarkButton><FourDots s={17} /><Fit w={32}>Color</Fit></MarkButton>
              <MarkButton><Svg w={19} h={18} s={1.4}><circle cx="11" cy="7.5" r="6.8" /><circle cx="5" cy="13" r="4.3" fill="#fbfbfb" /></Svg><Fit w={25}>Size</Fit></MarkButton>
              <MarkButton><TIcon /><Fit w={32}>Label</Fit></MarkButton>
              <MarkButton><Svg w={20} h={17} s={1.3}><circle cx="10" cy="4.5" r="3" fill="#666" stroke="none" /><circle cx="3" cy="12.5" r="2.2" /><circle cx="10" cy="12.5" r="2.2" /><circle cx="17" cy="12.5" r="2.2" /></Svg><Fit w={34}>Detail</Fit></MarkButton>
              <MarkButton><Svg w={19} h={18} s={1.4}><path d="M1 1.500h17v11h-4.500V16L9 12.500H1z" /></Svg><Fit w={41}>Tooltip</Fit></MarkButton>
            </MarkGrid>
            <PillStack $mt={8}>
              <PillLine $l={11}><PillIcon $w={20}><FourDots s={14} /></PillIcon><Pill $w={142} $c={BLUE}><Fit w={32}>Area</Fit></Pill></PillLine>
              <PillLine $l={11}><PillIcon $w={20}><TIcon w={13} h={12} /></PillIcon><Pill $w={142} $c={BLUE}><Fit w={32}>Area</Fit></Pill></PillLine>
            </PillStack>
          </Card>
        </Cards>

        <Right>
          <Shelf>
            <ShelfName $l={8}><Svg w={11} h={12} s={2}><path d="M1.500 0v2M5.500 0v2M9.500 0v2M1.500 3v9M5.500 3v9M9.500 3v9" /></Svg><Fit w={61}>Columns</Fit></ShelfName>
            <Pill $w={178} $c={BLUE}><Fit w={61}>Location</Fit><svg width="10" height="10"><path d="M0 0h3v2H0zM0 4h6v2H0zM0 8h10v2H0z" fill="#fff" /></svg></Pill>
          </Shelf>
          <Shelf>
            <ShelfName $l={7}><Svg w={12} h={11} s={2}><path d="M0 1.500h2M0 5.500h2M0 9.500h2M3 1.500h9M3 5.500h9M3 9.500h9" /></Svg><Fit w={37}>Rows</Fit></ShelfName>
            <Pill $w={178} $c={GREEN}><Fit w={81}>SUM(Price)</Fit></Pill>
          </Shelf>
          <Lower>
            <View>
              <ChartTitle><Fit w={504}>House Price Based on Number of Bedrooms</Fit></ChartTitle>
              <Chart />
              <HScroll><ScrollEnd $w={21}><Chev d="left" /></ScrollEnd><HThumb /><ScrollEnd><Chev d="right" /></ScrollEnd></HScroll>
            </View>
            <Legend>
              <LegendHead><Fit w={31}>Area</Fit></LegendHead>
              <LegendBody>
                <LegendList>
                  {AREAS.map((a, i) => <LegendItem key={a}><Swatch $c={PAL[LEGEND_ORDER[i % 20]]} /><Fit w={26}>{String(a)}</Fit></LegendItem>)}
                </LegendList>
                <VScroll $h={743}><ScrollEnd><Chev d="up" /></ScrollEnd><VThumb $h={49} /><ScrollEnd><Chev d="down" /></ScrollEnd></VScroll>
              </LegendBody>
            </Legend>
          </Lower>
        </Right>
      </Work>

      <SheetTabs>
        <SheetTab $w={163} $l={10}><Svg w={10} h={13} s={1.2}><ellipse cx="5" cy="2.5" rx="4" ry="1.5" /><path d="M1 2.500v8c0 2 8 2 8 0v-8" /></Svg><Fit w={84}>Data Source</Fit></SheetTab>
        {SHEETS.map(([t, w, tw, a]) => <SheetTab key={t} $w={w} $l={6} $active={a}><Fit w={tw}>{t}</Fit></SheetTab>)}
        {[0, 1, 2].map((k) => <SheetTab key={k} $w={32} $l={8}><SheetIcon kind={k} /></SheetTab>)}
      </SheetTabs>
      <Status>
        <StatusText $l={3}><Fit w={77}>16505 marks</Fit></StatusText>
        <StatusText $l={20}><Fit w={132}>1 row by 1775 columns</Fit></StatusText>
        <StatusText $l={20}><Fit w={173}>SUM(Price): 341,388,413,017</Fit></StatusText>
        <StatusCell $push $w={157} /><StatusCell $w={32} /><StatusCell $w={32} /><StatusCell $w={57} />
        <StatusCell $w={71}><svg width="56" height="9" fill="#555"><path d="M1 1h1.500v7H1zM8 1v7L3 4.500zM22 1v7l-4-3.500zM34 1v7l4-3.500zM49 1v7l5-3.500zM54 1h1.500v7H54z" /></svg></StatusCell>
        <StatusCell $w={70}><svg width="55" height="11"><g fill="#bcbcbc">{[0, 4, 8].flatMap((x) => [0, 4, 8].map((y) => <rect key={`${x}-${y}`} x={x} y={y} width="3" height="3" />))}<path d="M22 0h11v7H22zM22 8h3v3h-3zM26 8h3v3h-3zM30 8h3v3h-3z" /></g><path d="M44 0h11v11H44z" fill="#666" /></svg></StatusCell>
      </Status>

      <TaskBar>
        <Start><svg width="20" height="20" viewBox="0 0 20 20" fill="#fff"><path d="M0 3l8.500-1.200v7.700H0zM9.500 1.600 20 0v9.500H9.500zM0 10.500h8.500v7.700L0 17zM9.500 10.500H20V20L9.500 18.400z" /></svg></Start>
        <TaskSearch>
          <Svg w={20} h={20} c="#222" s={1.6}><circle cx="12.5" cy="7.5" r="6.5" /><path d="M8 12.500 1 19.500" /></Svg>
          <TaskSearchText><Fit w={163}>Type here to search</Fit></TaskSearchText>
          <svg width="78" height="32" viewBox="0 0 78 32"><path d="M30 3c2.500 6.500 5.500 9.500 12.500 12-7 2.500-10 5.500-12.500 12-2.500-6.500-5.500-9.500-12.500-12C24.500 12.500 27.500 9.500 30 3z" fill="#fcc419" stroke="#fcc419" strokeWidth="4" strokeLinejoin="round" /><path d="M58 16c1 3 2 4 5.500 5-3.500 1-4.500 2-5.500 5-1-3-2-4-5.500-5 3.500-1 4.500-2 5.500-5z" fill="#fbb829" stroke="#fbb829" strokeWidth="2.5" strokeLinejoin="round" /><path d="M6 21.500 8.500 25l4.500.5-4 2.500-.5 4-3-3.500L1 28l3-2.500z" fill="#12a5ef" stroke="#12a5ef" /><circle cx="50.5" cy="3.5" r="2.7" fill="#f0662f" /><circle cx="73" cy="28.5" r="2.7" fill="#7ec142" /></svg>
        </TaskSearch>
        {APPS.map(([open, art], i) => (
          <TaskTile key={i} $first={i === 0} $focus={open === 62}>
            <TaskArt>{art}</TaskArt>
            <OpenBar $w={open} />
          </TaskTile>
        ))}
        <Tray>
          <svg width="30" height="20" viewBox="0 0 30 20" fill="none" stroke="#fff" strokeWidth="2"><path d="M1 1h25v18H4c-2 0-3-1-3-3zM26 4h3v12c0 2-1 3-3 3M5 6h17M16 10h6M16 14h6" /><path d="M6 10h6v4H6z" /></svg>
          <TrayItem $l={10} $s={18}><Fit w={103}>29°C  Cloudy</Fit></TrayItem>
          <TrayItem $l={30}><Svg w={17} h={9} c="#fff" s={1.5}><path d="m.8 8.300 7.700-7.500 7.700 7.500" /></Svg></TrayItem>
          <TrayItem $l={15}><Svg w={15} h={18} c="#fff" s={1.2}><rect x="1" y="4.5" width="8.5" height="9" rx="1" /><path d="m9.500 8 4-2.500v7L9.500 10M2 2c2-1.500 5-1.500 7 0M2 16c2 1.500 5 1.500 7 0" /></Svg></TrayItem>
          <TrayItem $l={11}><Svg w={21} h={18} c="#fff" s={1.3}><path d="M1 6.500h3l4-4v13l-4-4H1zM11 6.500c1.300 1.500 1.300 3.500 0 5M14 4.500c2.500 2.500 2.500 6.500 0 9M17 2.500c4 4 4 9 0 13" /></Svg></TrayItem>
          <TrayItem $l={12} $s={15.5}><Fit w={29}>ENG</Fit></TrayItem>
          <Clock><Fit w={34}>10:39</Fit><br /><Fit w={75}>16-10-2023</Fit></Clock>
          <TrayItem $l={20}>
            <svg width="34" height="34" viewBox="0 0 34 34"><path d="M1 3h20v17H9l-4 4v-4H1z" fill="#fff" /><path d="M5 7.500h12M5 11.500h12M5 15.500h7" stroke="#1b2b31" strokeWidth="1.4" /><circle cx="20.5" cy="22" r="11" fill="#35434a" stroke="#8b969b" strokeWidth="1.3" /><text x="20.5" y="27.5" textAnchor="middle" fontSize="15" fontWeight="600" fontFamily="Open Sans" fill="#fff">19</text></svg>
          </TrayItem>
          <ShowDesk />
        </Tray>
      </TaskBar>
    </Screen>
  );
}
